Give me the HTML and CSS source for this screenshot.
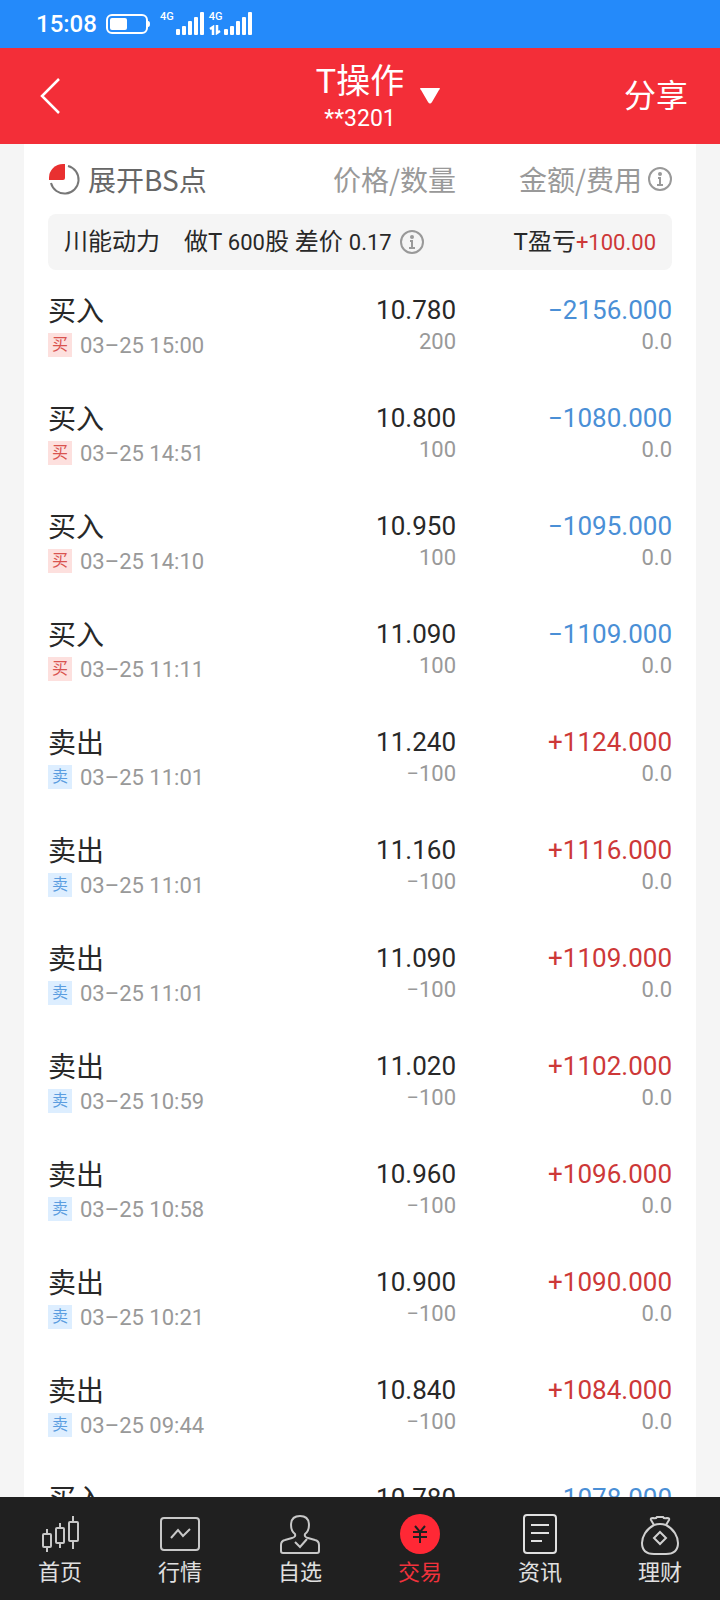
FILE: index.html
```html
<!DOCTYPE html>
<html lang="zh-CN">
<head>
    <meta charset="UTF-8">
    <meta name="viewport" content="width=device-width, initial-scale=1.0">
    <title>T操作</title>
    <link rel="stylesheet" href="styles.css">
</head>
<body>
    <div class="status-bar">
        <span class="time">15:08</span>
        <svg class="battery" width="44" height="20" viewBox="0 0 44 20">
            <rect x="1" y="1" width="40" height="18" rx="5" fill="none" stroke="#fff" stroke-width="2"/>
            <rect x="4" y="4" width="17" height="12" rx="2" fill="#fff"/>
            <path d="M42 7q2 0 2 3t-2 3z" fill="#fff"/>
        </svg>
        <div class="signals">
            <div class="signal">
                <span class="net">4G</span>
                <svg width="28" height="24" viewBox="0 0 28 24" fill="#fff">
                    <rect x="0" y="17" width="4" height="6" rx="1"/>
                    <rect x="6" y="14" width="4" height="9" rx="1"/>
                    <rect x="12" y="9" width="4" height="14" rx="1"/>
                    <rect x="18" y="5" width="4" height="18" rx="1"/>
                    <rect x="24" y="0" width="4" height="23" rx="1"/>
                </svg>
            </div>
            <div class="signal">
                <div class="net-data">
                    <span class="net">4G</span>
                    <svg width="12" height="10" viewBox="0 0 12 10" fill="none" stroke="#fff" stroke-width="2.5">
                        <path d="M4 10V2L1 4M8 0v8l3-2"/>
                    </svg>
                </div>
                <svg width="28" height="24" viewBox="0 0 28 24" fill="#fff">
                    <rect x="0" y="17" width="4" height="6" rx="1"/>
                    <rect x="6" y="14" width="4" height="9" rx="1"/>
                    <rect x="12" y="9" width="4" height="14" rx="1"/>
                    <rect x="18" y="5" width="4" height="18" rx="1"/>
                    <rect x="24" y="0" width="4" height="23" rx="1"/>
                </svg>
            </div>
        </div>
    </div>

    <header class="navbar">
        <a class="back" href="#" aria-label="返回">
            <svg width="20" height="36" viewBox="0 0 20 36" fill="none" stroke="#fff" stroke-width="2.5">
                <path d="M19 1L2 18l17 17"/>
            </svg>
        </a>
        <button class="account" type="button">
            <span class="account-text">
                <span class="account-title">T操作</span>
                <span class="account-no">**3201</span>
            </span>
            <svg width="20" height="16" viewBox="0 0 20 16" fill="#fff">
                <path d="M1 0h18q2 0 0 2l-7 12q-2 3-4 0L1 2q-2-2 0-2z"/>
            </svg>
        </button>
        <button class="share" type="button">分享</button>
    </header>

    <main class="content">
        <table class="trades">
            <thead>
                <tr>
                    <th>
                        <button class="expand" type="button">
                            <svg width="32" height="32" viewBox="0 0 32 32">
                                <path d="M20 3a14 14 0 1 1-17 17" fill="none" stroke="#777" stroke-width="2"/>
                                <path d="M17 1v14q0 2-2 2H1v-2A14 14 0 0 1 15 1z" fill="#e93030"/>
                            </svg>
                            展开BS点
                        </button>
                    </th>
                    <th>价格/数量</th>
                    <th>
                        <span class="with-info">金额/费用
                            <svg class="info" width="24" height="24" viewBox="0 0 24 24">
                                <circle cx="12" cy="12" r="11" fill="none" stroke="#999" stroke-width="2"/>
                                <circle cx="12" cy="7" r="2" fill="#999"/>
                                <path d="M10 11h2v6M9 18h6" fill="none" stroke="#999" stroke-width="2"/>
                            </svg>
                        </span>
                    </th>
                </tr>
                <tr>
                    <td colspan="3" class="summary-cell">
                        <div class="summary">
                            <span class="stock">川能动力</span>
                            <span>做T <span class="num">600</span>股 差价 <span class="num">0.17</span></span>
                            <svg class="info" width="24" height="24" viewBox="0 0 24 24">
                                <circle cx="12" cy="12" r="11" fill="none" stroke="#999" stroke-width="2"/>
                                <circle cx="12" cy="7" r="2" fill="#999"/>
                                <path d="M10 11h2v6M9 18h6" fill="none" stroke="#999" stroke-width="2"/>
                            </svg>
                            <span class="profit">T盈亏<span class="num in">+100.00</span></span>
                        </div>
                    </td>
                </tr>
            </thead>
            <tbody id="tradeList"></tbody>
        </table>
    </main>

    <nav class="tabbar">
        <a class="tab" href="#">
            <svg width="40" height="42" viewBox="0 0 40 42" fill="none" stroke="#c8c8c8" stroke-width="2">
                <path d="M7 16v5M7 34v5M20 10v5M20 30v5M33 3v6M33 28v8"/>
                <rect x="3" y="21" width="8" height="13" rx="1"/>
                <rect x="16" y="15" width="8" height="15" rx="1"/>
                <rect x="29" y="9" width="9" height="19" rx="1"/>
            </svg>
            首页
        </a>
        <a class="tab" href="#">
            <svg width="40" height="42" viewBox="0 0 40 42" fill="none" stroke="#c8c8c8" stroke-width="2">
                <rect x="1" y="5" width="38" height="32" rx="3"/>
                <path d="M11 25l7-8 5 6 7-7"/>
            </svg>
            行情
        </a>
        <a class="tab" href="#">
            <svg width="40" height="42" viewBox="0 0 40 42" fill="none" stroke="#c8c8c8" stroke-width="2">
                <path d="M15 21C10 17 8 3 20 3s10 14 5 18q-1 3 3 4l7 2q4 1 4 5v6q0 2-2 2H3q-2 0-2-2v-6q0-4 4-5l7-2q4-1 3-4z"/>
                <path d="M15 29l5 5 7-8"/>
            </svg>
            自选
        </a>
        <a class="tab active" href="#">
            <svg width="40" height="42" viewBox="0 0 40 42">
                <circle cx="20" cy="21" r="20" fill="#ff2835"/>
                <path d="M15 13l5 6 5-6M13 19h14M13 24h14M20 19v11" fill="none" stroke="#202020" stroke-width="2"/>
            </svg>
            交易
        </a>
        <a class="tab" href="#">
            <svg width="40" height="42" viewBox="0 0 40 42" fill="none" stroke="#e0e0e0" stroke-width="2">
                <rect x="4" y="2" width="32" height="38" rx="3"/>
                <path d="M11 12h18M11 20h18M11 28h11"/>
            </svg>
            资讯
        </a>
        <a class="tab" href="#">
            <svg width="40" height="42" viewBox="0 0 40 42" fill="none" stroke="#d0d0d0" stroke-width="2">
                <path d="M14 12l-3-5q-1-2 2-2 3 1 4-1h6q1 2 4 1 3 0 2 2l-3 5"/>
                <path d="M14 12q6-2 12 0c8 4 12 12 12 18q0 11-12 11H14Q2 41 2 30c0-6 4-14 12-18z"/>
                <path d="M20 19l6 6-6 6-6-6z"/>
            </svg>
            理财
        </a>
    </nav>

    <script src="script.js"></script>
</body>
</html>
```
FILE: styles.css
```css
* {
    box-sizing: border-box;
}
body {
    display: flex;
    flex-direction: column;
    height: 100vh;
    margin: 0;
    background: #f5f5f5;
    color: #282828;
    font-family: Roboto, "Noto Sans CJK SC", sans-serif;
}
button {
    padding: 0;
    border: none;
    background: none;
    color: inherit;
    font: inherit;
    cursor: pointer;
}
a {
    color: inherit;
    text-decoration: none;
}
svg {
    display: block;
    flex: none;
}

/* status bar */
.status-bar {
    display: flex;
    align-items: center;
    flex: none;
    height: 48px;
    padding: 0 36px;
    background: #248afa;
    color: #fff;
}
.time {
    font-size: 24px;
    font-weight: 500;
}
.battery {
    margin-left: 9px;
}
.signals {
    display: flex;
    gap: 5px;
    margin-left: 10px;
}
.signal {
    display: flex;
    gap: 2px;
}
.net-data {
    display: flex;
    flex-direction: column;
    gap: 3px;
}
.net {
    font-size: 11px;
    font-weight: 500;
    line-height: 10px;
}

/* header */
.navbar {
    display: grid;
    grid-template-columns: 1fr auto 1fr;
    align-items: center;
    flex: none;
    height: 96px;
    padding: 0 32px 0 40px;
    background: #f32e38;
    color: #fff;
}
.account {
    display: flex;
    align-items: center;
    gap: 16px;
    padding-left: 28px;
}
.account-text {
    display: flex;
    flex-direction: column;
    align-items: center;
    padding-top: 2px;
}
.account-title {
    font-size: 34px;
    line-height: 44px;
}
.account-no {
    font-size: 23px;
    line-height: 32px;
}
.share {
    justify-self: end;
    font-size: 32px;
    line-height: 44px;
}

/* trade list */
.content {
    flex: 1;
    min-height: 0;
    margin: 0 24px;
    padding: 0 24px;
    overflow-y: auto;
    background: #fff;
    scrollbar-width: none;
}
.trades {
    width: 100%;
    table-layout: fixed;
    border-collapse: collapse;
}
.trades th {
    width: 35%;
    height: 70px;
    padding: 0;
    color: #999;
    font-family: "Noto Sans CJK SC", sans-serif;
    font-size: 28px;
    font-weight: 400;
    line-height: 40px;
    text-align: right;
    white-space: nowrap;
}
.trades th:first-child {
    width: auto;
    color: #666;
    text-align: left;
}
.trades th:last-child {
    width: 216px;
}
.expand,
.with-info {
    display: flex;
    align-items: center;
    gap: 8px;
}
.with-info {
    gap: 6px;
    justify-content: flex-end;
}
.summary-cell {
    padding: 0;
}
.summary {
    display: flex;
    align-items: center;
    height: 56px;
    padding: 0 16px;
    border-radius: 8px;
    background: #f5f5f5;
    font-size: 24px;
    line-height: 32px;
}
.num {
    font-size: 22px;
}
.stock {
    margin-right: 24px;
}
.summary .info {
    margin-left: 8px;
}
.profit {
    margin-left: auto;
}
.trade td {
    height: 108px;
    padding: 22px 0 0;
    text-align: right;
    vertical-align: top;
    white-space: nowrap;
}
.trade td:first-child {
    text-align: left;
}
.name {
    font-size: 28px;
    line-height: 40px;
}
.value {
    font-size: 26px;
    line-height: 36px;
}
.date,
.sub {
    color: #999;
    font-size: 22px;
}
.date {
    display: flex;
    align-items: center;
    gap: 8px;
    height: 26px;
}
.sub {
    line-height: 28px;
}
.tag {
    width: 24px;
    height: 24px;
    font-size: 16px;
    line-height: 24px;
    text-align: center;
}
.tag.buy {
    background: #fde0de;
    color: #d9534f;
}
.tag.sell {
    background: #ddeeff;
    color: #5b9de0;
}
.in {
    color: #cd3838;
}
.out {
    color: #4a8fd6;
}

/* bottom tabs */
.tabbar {
    display: flex;
    flex: none;
    height: 103px;
    padding-top: 16px;
    background: #202020;
    color: #e0e0e0;
}
.tab {
    display: flex;
    flex: 1;
    flex-direction: column;
    align-items: center;
    gap: 2px;
    font-size: 22px;
    line-height: 32px;
}
.tab.active {
    color: #f0323c;
}
```
FILE: script.js
```js
const trades = [
    { type: 'buy', time: '03–25 15:00', price: '10.780', count: '200', amount: '−2156.000' },
    { type: 'buy', time: '03–25 14:51', price: '10.800', count: '100', amount: '−1080.000' },
    { type: 'buy', time: '03–25 14:10', price: '10.950', count: '100', amount: '−1095.000' },
    { type: 'buy', time: '03–25 11:11', price: '11.090', count: '100', amount: '−1109.000' },
    { type: 'sell', time: '03–25 11:01', price: '11.240', count: '−100', amount: '+1124.000' },
    { type: 'sell', time: '03–25 11:01', price: '11.160', count: '−100', amount: '+1116.000' },
    { type: 'sell', time: '03–25 11:01', price: '11.090', count: '−100', amount: '+1109.000' },
    { type: 'sell', time: '03–25 10:59', price: '11.020', count: '−100', amount: '+1102.000' },
    { type: 'sell', time: '03–25 10:58', price: '10.960', count: '−100', amount: '+1096.000' },
    { type: 'sell', time: '03–25 10:21', price: '10.900', count: '−100', amount: '+1090.000' },
    { type: 'sell', time: '03–25 09:44', price: '10.840', count: '−100', amount: '+1084.000' },
    { type: 'buy', time: '', price: '10.780', count: '', amount: '−1078.000' }
];

const tradeList = document.getElementById('tradeList');

trades.forEach(trade => {
    const isBuy = trade.type === 'buy';
    const row = document.createElement('tr');
    row.className = 'trade';
    row.innerHTML = `
        <td>
            <div class="name">${isBuy ? '买入' : '卖出'}</div>
            ${trade.time ? `<div class="date"><span class="tag ${trade.type}">${isBuy ? '买' : '卖'}</span>${trade.time}</div>` : ''}
        </td>
        <td>
            <div class="value">${trade.price}</div>
            ${trade.count ? `<div class="sub">${trade.count}</div>` : ''}
        </td>
        <td>
            <div class="value ${isBuy ? 'out' : 'in'}">${trade.amount}</div>
            ${trade.count ? '<div class="sub">0.0</div>' : ''}
        </td>
    `;
    tradeList.appendChild(row);
});
```
